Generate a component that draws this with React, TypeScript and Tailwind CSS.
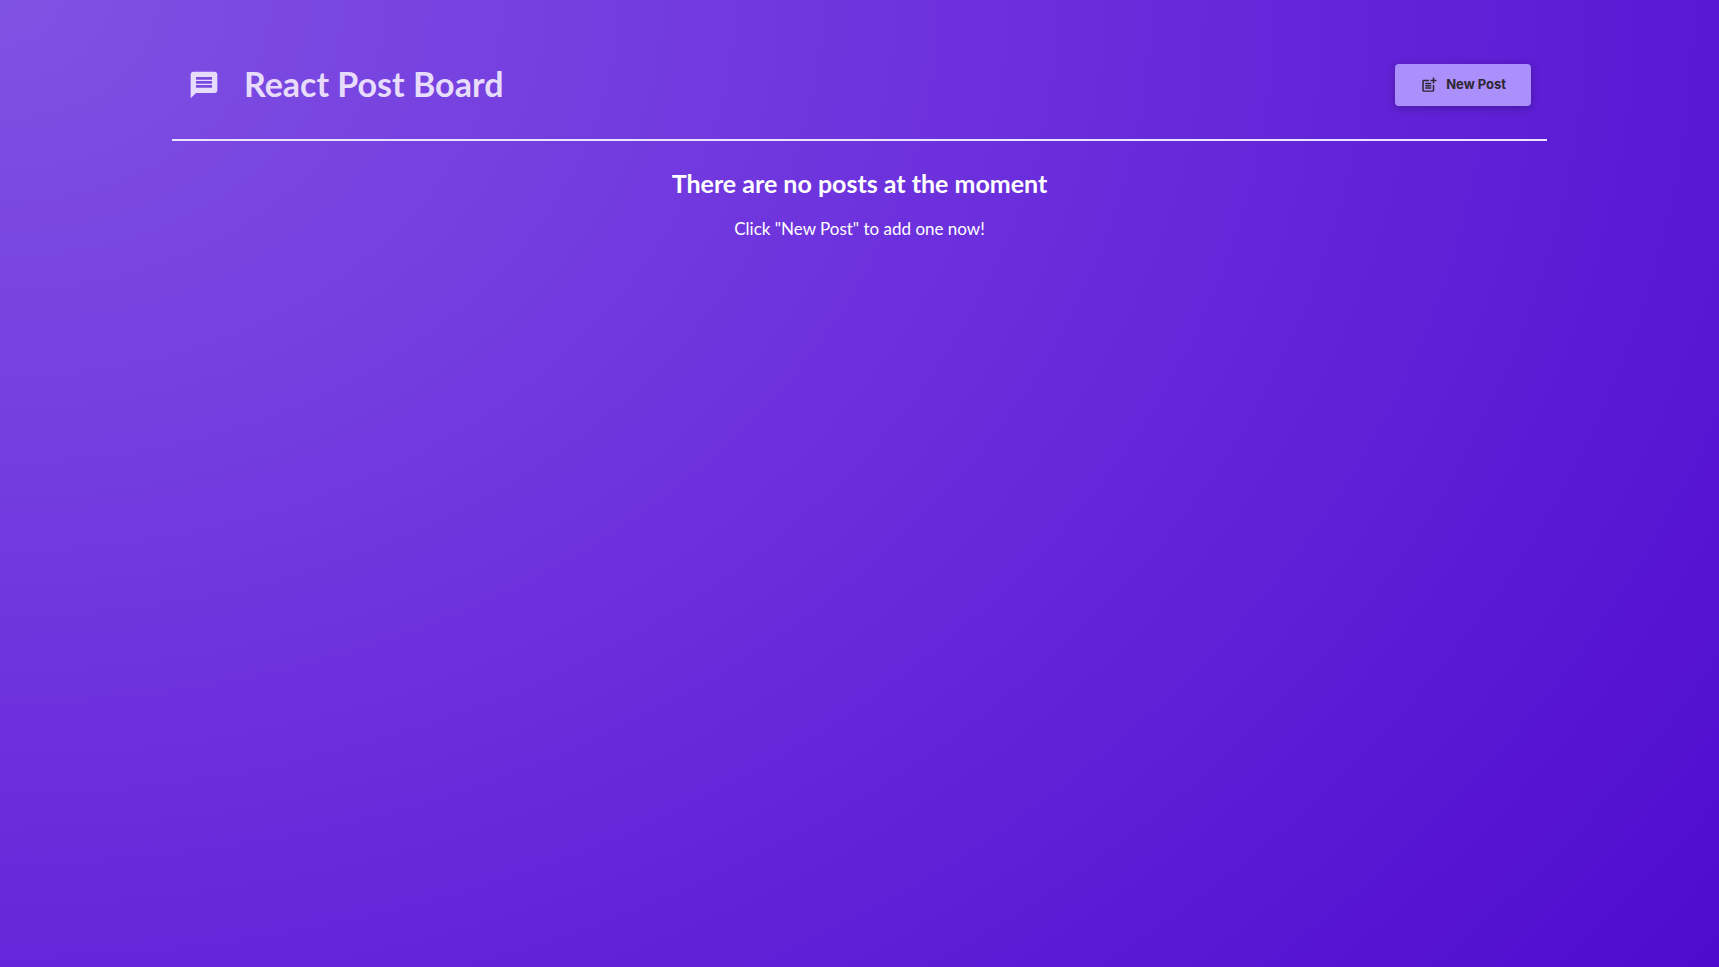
import { MdMessage, MdPostAdd } from 'react-icons/md';

function MainHeader() {
  return (
    <header className="mx-auto flex w-4/5 items-center justify-between border-b-2 border-[#ebe2fd] px-4 pt-16 pb-[33px]">
      <h1 className="flex items-center gap-6 text-[34px] leading-10 font-bold text-[#e8dcfc]">
        <MdMessage className="size-8" aria-hidden="true" />
        <span className="pb-0.5">React Post Board</span>
      </h1>
      <button
        type="button"
        className="flex h-[42px] items-center gap-2 rounded bg-[#ab90fb] px-[25px] font-['Inter',sans-serif] text-[13px] font-bold text-[#2c2532] shadow-[0_2px_8px_rgba(0,0,0,0.25)]"
      >
        <MdPostAdd className="size-[18px]" aria-hidden="true" />
        New Post
      </button>
    </header>
  );
}

function EmptyPosts() {
  return (
    <main className="px-4 pt-6 text-center text-white">
      <h2 className="text-[25px] leading-9 font-bold">There are no posts at the moment</h2>
      <p className="mt-4 text-[17px] leading-6">Click &quot;New Post&quot; to add one now!</p>
    </main>
  );
}

export default function App() {
  return (
    <div className="min-h-screen bg-[radial-gradient(141%_188%_at_top_left,#8052e3,#6b2fdc_42%,#4c08cd_92%)] font-['Lato',sans-serif]">
      <MainHeader />
      <EmptyPosts />
    </div>
  );
}
